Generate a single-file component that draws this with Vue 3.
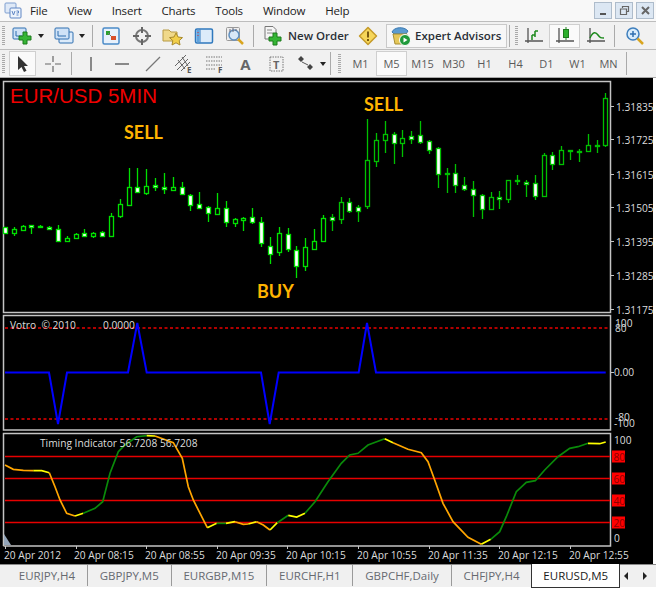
<script setup>
// candles in 3x zoomed px: [wickTop, wickBottom, bodyTop, bodyBottom, filled]
const rawCandles = [
  [440,460,442,458,1],[441,468,447,458,0],[435,453,438,450,0],[435,462,435,440,1],[434,444,438,442,1],
  [437,449,441,446,1],[436,487,446,483,1],[467,485,474,484,0],[460,476,463,474,0],[448,472,460,468,1],
  [456,474,460,469,0],[452,470,457,468,1],[400,470,408,468,0],[356,415,371,408,0],[265,378,320,374,0],
  [265,337,320,335,1],[268,345,317,340,0],[293,333,316,320,1],[278,343,320,326,1],[291,332,320,330,0],
  [306,345,320,343,1],[343,393,345,376,1],[337,387,373,383,1],[378,425,382,399,1],[340,403,385,402,0],
  [363,440,383,427,1],[413,441,418,428,0],[410,453,413,421,0],[385,433,411,427,1],[412,500,427,490,1],
  [470,553,499,521,1],[441,527,458,517,0],[445,517,461,508,1],[498,594,509,558,1],[475,572,502,559,0],
  [447,510,483,506,0],[406,487,413,484,0],
  [403,453,411,421,1],[350,431,367,418,0],[353,400,367,392,1],[375,425,382,393,1],[118,387,241,377,0],
  [159,262,179,242,0],[124,218,163,179,0],[156,252,163,188,1],[150,230,175,189,0],[153,192,169,176,1],
  [124,192,166,185,1],[181,223,184,210,1],[202,325,204,283,1],[265,340,278,283,1],[253,340,279,314,1],
  [291,332,316,327,1],[304,410,326,345,1],[343,416,345,386,1],[335,388,351,386,0],[332,388,351,358,1],
  [300,369,301,358,0],[285,316,300,304,1],[300,350,305,311,1],[285,360,310,348,1],[220,350,226,349,0],
  [216,271,226,251,1],[197,252,210,251,0],[209,240,210,214,1],[207,246,212,215,1],[162,217,194,214,0],
  [181,218,194,198,1],[40,202,53,194,0],
]

const candles = rawCandles.map((c, i) => {
  const y = (v) => Math.round(80 + v / 3)
  const top = y(c[2])
  return {
    x: Math.round(5 + i * 8.83) + 0.5,
    wickTop: y(c[0]),
    wickBottom: y(c[1]),
    bodyY: top + 0.5,
    bodyH: Math.max(y(c[3]) - top, 1),
    fill: c[4] ? '#ffffff' : '#000000',
    color: i < 37 ? '#00e000' : '#00c000',
  }
})

const priceLabels = [
  { text: '1.31835', y: 107 }, { text: '1.31725', y: 140 }, { text: '1.31615', y: 175 },
  { text: '1.31505', y: 208 }, { text: '1.31395', y: 242 }, { text: '1.31285', y: 276 },
  { text: '1.31175', y: 310 },
]

const votroLine = '5,372.5 49,372.5 58,424 67,372.5 128,372.5 137.3,323 146.7,372.5 261,372.5 269.7,424 278.7,372.5 358.7,372.5 367,323 376,372.5 605.7,372.5'

const votroLabels = [
  { text: '100', x: 615, y: 327 }, { text: '80', x: 615, y: 332 }, { text: '0.00', x: 614, y: 376 },
  { text: '-80', x: 615, y: 421 }, { text: '-100', x: 614, y: 427 },
]

const levels = [
  { y: 456.5, text: '80', textY: 460.5 }, { y: 478.5, text: '60', textY: 482.5 },
  { y: 500.5, text: '40', textY: 504.5 }, { y: 522.5, text: '20', textY: 526.5 },
]

// timing line pieces, also in 3x px starting at y 430
const timing = [
  ['#ffa500', '15,105 40,118 70,121 100,122'],
  ['#ffff00', '100,122 125,122 148,128'],
  ['#ffa500', '148,128 165,170 180,210 200,250 225,258'],
  ['#ffff00', '225,258 250,250'],
  ['#0a8a0a', '250,250 285,235 308,215 330,130 355,65 375,45 410,20 440,17'],
  ['#ffff00', '440,17 465,18'],
  ['#ffa500', '465,18 520,38 547,85 565,170 580,210 622,293'],
  ['#ffff00', '622,293 650,280'],
  ['#0a8a0a', '650,280 678,280'],
  ['#ffff00', '678,280 705,275'],
  ['#ffa500', '705,275 730,283 745,282'],
  ['#ffff00', '745,282 770,275'],
  ['#ffa500', '770,275 790,285 810,300'],
  ['#ffff00', '810,300 832,278'],
  ['#0a8a0a', '832,278 865,256'],
  ['#ffff00', '865,256 890,261 915,250'],
  ['#0a8a0a', '915,250 945,215 984,155 1024,100 1049,75 1074,70 1104,45 1154,26'],
  ['#ffff00', '1154,26 1179,38'],
  ['#ffa500', '1179,38 1224,58 1264,68 1284,95 1304,150 1329,220 1359,275 1404,322 1444,343'],
  ['#ffff00', '1444,343 1472,328'],
  ['#0a8a0a', '1472,328 1499,305 1519,260 1549,185 1579,157 1606,152 1634,120 1674,80 1709,55 1734,50 1764,40'],
  ['#ffff00', '1764,40 1799,41 1817,36'],
].map(([color, pts]) => ({
  color,
  points: pts.split(' ').map((p) => {
    const [x, y] = p.split(',').map(Number)
    return `${(x / 3).toFixed(1)},${(430 + y / 3).toFixed(1)}`
  }).join(' '),
}))

const dates = [
  { text: '20 Apr 2012', x: 4, tick: 5 }, { text: '20 Apr 08:15', x: 74, tick: 76 },
  { text: '20 Apr 08:55', x: 145, tick: 146 }, { text: '20 Apr 09:35', x: 216, tick: 217 },
  { text: '20 Apr 10:15', x: 286, tick: 287 }, { text: '20 Apr 10:55', x: 357, tick: 358 },
  { text: '20 Apr 11:35', x: 428, tick: 429 }, { text: '20 Apr 12:15', x: 498, tick: 499 },
  { text: '20 Apr 12:55', x: 569, tick: 570 },
]

const menus = ['File', 'View', 'Insert', 'Charts', 'Tools', 'Window', 'Help']
const periods = ['M1', 'M5', 'M15', 'M30', 'H1', 'H4', 'D1', 'W1', 'MN']
const tabs = ['EURJPY,H4', 'GBPJPY,M5', 'EURGBP,M15', 'EURCHF,H1', 'GBPCHF,Daily', 'CHFJPY,H4']
</script>

<template>
  <div class="terminal">
    <div class="menubar">
      <svg class="app-icon" width="18" height="18" viewBox="0 0 18 18">
        <rect x="1" y="1" width="11" height="10" rx="1" fill="#dfe9f7" stroke="#7f9fd0" />
        <rect x="6" y="6" width="11" height="10" rx="1" fill="#eef4fc" stroke="#5f86c4" />
        <path d="M8 9l1.500 4L11 9M12.500 13h2M12.500 9h2v2h-2" fill="none" stroke="#5f86c4" />
      </svg>
      <span v-for="m in menus" :key="m" class="menu-item">{{ m }}</span>
      <div class="win-buttons">
        <span class="win-btn"><svg width="10" height="10" viewBox="0 0 10 10"><path d="M2 8h6" stroke="#555" stroke-width="2" /></svg></span>
        <span class="win-btn"><svg width="11" height="11" viewBox="0 0 11 11"><path d="M3.500 3V1.500h6v5H8M1.500 4h6v5.500h-6z" fill="none" stroke="#666" stroke-width="1.200" /></svg></span>
        <span class="win-btn"><svg width="11" height="11" viewBox="0 0 11 11"><path d="M2 2l7 7M9 2l-7 7" stroke="#666" stroke-width="2" /></svg></span>
      </div>
    </div>

    <div class="toolbar row-one">
      <span class="grip"></span>
      <span class="tool drop">
        <svg width="22" height="20" viewBox="0 0 22 20">
          <rect x="1" y="2" width="13" height="11" rx="1" fill="#cfe2f7" stroke="#2f6fb0" />
          <path d="M4 5v5h6" fill="none" stroke="#2f6fb0" />
          <path d="M11 6h4v4h4v4h-4v4h-4v-4H7v-4h4z" fill="#35b535" stroke="#1d7a1d" />
        </svg>
        <i class="caret"></i>
      </span>
      <span class="tool drop">
        <svg width="22" height="20" viewBox="0 0 22 20">
          <rect x="6" y="6" width="14" height="11" rx="1" fill="#dcebfa" stroke="#2f6fb0" />
          <rect x="2" y="2" width="14" height="11" rx="1" fill="#cfe2f7" stroke="#2f6fb0" />
          <path d="M5 5v5h8" fill="none" stroke="#2f6fb0" />
        </svg>
        <i class="caret"></i>
      </span>
      <span class="sep first"></span>
      <span class="tool">
        <svg width="20" height="20" viewBox="0 0 20 20">
          <rect x="2" y="2" width="16" height="16" rx="1.500" fill="#e8f1fb" stroke="#4a8ac8" stroke-width="1.500" />
          <path d="M5 5h4v4H5z" fill="#2ea02e" />
          <path d="M7 7l4 4" stroke="#777" />
          <path d="M10 10h5v4h-5z" fill="#d9502a" />
        </svg>
      </span>
      <span class="tool">
        <svg width="20" height="20" viewBox="0 0 20 20">
          <circle cx="10" cy="10" r="6" fill="none" stroke="#777" stroke-width="2" />
          <path d="M10 1v6M10 13v6M1 10h6M13 10h6" stroke="#666" stroke-width="2" />
        </svg>
      </span>
      <span class="tool">
        <svg width="22" height="20" viewBox="0 0 22 20">
          <path d="M1 4h6l2 2h6v9H1z" fill="#f0d98a" stroke="#b79a45" />
          <path d="M14 7l2 4 4.500.6-3.300 3 .8 4.400-4-2.200-4 2.200.8-4.400-3.300-3L12 11z" fill="#f2cf4a" stroke="#a88a2c" />
        </svg>
      </span>
      <span class="tool">
        <svg width="20" height="20" viewBox="0 0 20 20">
          <rect x="1.500" y="3" width="17" height="14" rx="1.500" fill="#dcebfa" stroke="#2f78bd" stroke-width="1.500" />
          <path d="M6 3.500v13" stroke="#2f78bd" />
          <rect x="2.500" y="4" width="3" height="12" fill="#5fa3de" />
          <path d="M3.500 6.500h1M3.500 9.500h1" stroke="#d33" />
        </svg>
      </span>
      <span class="tool">
        <svg width="20" height="20" viewBox="0 0 20 20">
          <rect x="1.500" y="1.500" width="13" height="13" rx="1" fill="#eee" stroke="#999" />
          <circle cx="9" cy="9" r="5" fill="#d8e8f8" stroke="#5f8fbf" stroke-width="1.500" />
          <path d="M5 3v3M8 2v4M11 3v2" stroke="#667" />
          <path d="M13 13l5 5" stroke="#d9a520" stroke-width="2.500" />
        </svg>
      </span>
      <span class="sep second"></span>
      <span class="tool labelled order">
        <svg width="20" height="22" viewBox="0 0 20 22">
          <path d="M2 1.500h8l3 3V14H2z" fill="#f5f5f5" stroke="#777" />
          <path d="M4 5h5M4 8h6" stroke="#888" />
          <path d="M10 8h4v4h4v4h-4v4h-4v-4H6v-4h4z" fill="#35b535" stroke="#1d7a1d" />
        </svg>
        <span class="tool-text">New Order</span>
      </span>
      <span class="tool warn">
        <svg width="20" height="20" viewBox="0 0 20 20">
          <path d="M10 1.500L18.500 10 10 18.500 1.500 10z" fill="#f6d65a" stroke="#c59b2a" stroke-linejoin="round" stroke-width="1.500" />
          <path d="M10 5.500v6M10 13v2" stroke="#7a5a10" stroke-width="2" />
        </svg>
      </span>
      <span class="tool labelled advisors">
        <svg width="22" height="22" viewBox="0 0 22 22">
          <path d="M2 7c2-5 12-6 16-1l-2 3H4z" fill="#5b9bd0" stroke="#3a78b0" />
          <path d="M3 9h14l-1 10H5z" fill="#e5c75a" stroke="#a88f35" />
          <circle cx="15" cy="15" r="5.500" fill="#1f9a3a" stroke="#fff" />
          <path d="M13.500 12.500l4 2.500-4 2.500z" fill="#fff" />
        </svg>
        <span class="tool-text">Expert Advisors</span>
      </span>
      <span class="sep third"></span>
      <span class="grip inner"></span>
      <span class="tool narrow">
        <svg width="20" height="20" viewBox="0 0 20 20">
          <path d="M4 2v15M1 15h18" stroke="#555" stroke-width="1.300" />
          <path d="M8 9v5M8 9h3M11 5v6M11 5h3" stroke="#1d8a1d" stroke-width="1.500" fill="none" />
        </svg>
      </span>
      <span class="tool narrow active">
        <svg width="20" height="20" viewBox="0 0 20 20">
          <path d="M4 2v15M1 15h18" stroke="#555" stroke-width="1.300" />
          <path d="M11 1v13" stroke="#1d8a1d" />
          <rect x="8.500" y="3.500" width="5" height="8" fill="#2bb02b" stroke="#1d7a1d" />
        </svg>
      </span>
      <span class="tool narrow">
        <svg width="20" height="20" viewBox="0 0 20 20">
          <path d="M4 2v15M1 15h18" stroke="#555" stroke-width="1.300" />
          <path d="M4 12c3-7 6-6 8-3s3 3 6 3" fill="none" stroke="#1d8a1d" stroke-width="1.500" />
        </svg>
      </span>
      <span class="sep fourth"></span>
      <span class="tool narrow">
        <svg width="20" height="20" viewBox="0 0 20 20">
          <circle cx="8" cy="8" r="6" fill="#d8ecfb" stroke="#3f7fbd" stroke-width="1.500" />
          <path d="M5 8h6M8 5v6" stroke="#2f6fb0" stroke-width="1.500" />
          <path d="M12.500 12.500l5.500 5.500" stroke="#d9a520" stroke-width="2.500" />
        </svg>
      </span>
    </div>

    <div class="toolbar row-two">
      <span class="grip"></span>
      <span class="draw pointer active">
        <svg width="14" height="18" viewBox="0 0 14 18"><path d="M2 1v14l3.500-3 2.500 5 2.500-1.200-2.500-4.800H12z" fill="#333" /></svg>
      </span>
      <span class="draw">
        <svg width="18" height="18" viewBox="0 0 18 18"><path d="M9 1v6M9 11v6M1 9h6M11 9h6" stroke="#666" stroke-width="1.200" /></svg>
      </span>
      <span class="sep short"></span>
      <span class="draw">
        <svg width="18" height="18" viewBox="0 0 18 18"><path d="M9 2v14" stroke="#666" stroke-width="1.500" /></svg>
      </span>
      <span class="draw">
        <svg width="18" height="18" viewBox="0 0 18 18"><path d="M2 9h14" stroke="#666" stroke-width="1.500" /></svg>
      </span>
      <span class="draw">
        <svg width="18" height="18" viewBox="0 0 18 18"><path d="M2 16L16 2" stroke="#777" stroke-width="1.300" /></svg>
      </span>
      <span class="draw">
        <svg width="20" height="20" viewBox="0 0 20 20">
          <path d="M1 12L12 1M3 16L14 5M7 17L16 8M4 6l7 9M8 3l6 9" stroke="#666" fill="none" />
          <text x="13" y="19" class="mini">E</text>
        </svg>
      </span>
      <span class="draw">
        <svg width="20" height="20" viewBox="0 0 20 20">
          <path d="M1 3h16M1 7h16M1 11h16M1 15h10" stroke="#777" stroke-dasharray="1.500 1" fill="none" />
          <text x="13" y="19" class="mini">F</text>
        </svg>
      </span>
      <span class="draw letter">A</span>
      <span class="draw">
        <svg width="18" height="18" viewBox="0 0 18 18">
          <rect x="2" y="2" width="13" height="14" fill="none" stroke="#777" stroke-dasharray="1.500 1" />
          <text x="5" y="14" class="mid">T</text>
        </svg>
      </span>
      <span class="draw shapes">
        <svg width="20" height="18" viewBox="0 0 20 18">
          <path d="M1 4l3 3 3-3-3-3zM10 12l3 3 3-3-3-3z" fill="#444" />
          <path d="M5 7l6 3" stroke="#555" />
        </svg>
        <i class="caret"></i>
      </span>
      <span class="sep short last"></span>
      <span class="grip inner"></span>
      <span v-for="p in periods" :key="p" class="period" :class="{ active: p === 'M5' }">{{ p }}</span>
      <span class="sep short end"></span>
    </div>

    <div class="chart-window">
      <svg class="pane" width="653" height="236" viewBox="0 78 653 236">
        <rect x="3.500" y="81.500" width="607" height="231" fill="none" stroke="#c4c4c4" stroke-width="1.500" />
        <g v-for="(c, i) in candles" :key="i">
          <line :x1="c.x" :x2="c.x" :y1="c.wickTop" :y2="c.wickBottom" :stroke="c.color" stroke-width="1.300" />
          <rect :x="c.x - 2" :y="c.bodyY" width="4" :height="c.bodyH" :fill="c.fill" :stroke="c.color" stroke-width="1.300" />
        </g>
        <text x="10" y="103" class="title">EUR/USD 5MIN</text>
        <text x="124" y="139" class="signal">SELL</text>
        <text x="364" y="111" class="signal">SELL</text>
        <text x="257" y="298" class="signal">BUY</text>
        <g v-for="p in priceLabels" :key="p.text">
          <line x1="611" x2="614" :y1="p.y - 0.5" :y2="p.y - 0.5" stroke="#c4c4c4" />
          <text x="616" :y="p.y + 3.500" class="axis">{{ p.text }}</text>
        </g>
      </svg>

      <svg class="pane" width="653" height="118" viewBox="0 314 653 118">
        <rect x="3.500" y="315.500" width="607" height="114.500" fill="none" stroke="#c4c4c4" stroke-width="1.500" />
        <line x1="5" x2="610" y1="328" y2="328" class="dotted" />
        <line x1="5" x2="610" y1="419" y2="419" class="dotted" />
        <polyline :points="votroLine" fill="none" stroke="#0000ff" stroke-width="2" />
        <text x="10" y="329" class="axis">Votro&nbsp; © 2010</text>
        <text x="103" y="329" class="axis">0.0000</text>
        <text v-for="l in votroLabels" :key="l.text" :x="l.x" :y="l.y" class="axis">{{ l.text }}</text>
        <line x1="611" x2="614" y1="372.500" y2="372.500" stroke="#c4c4c4" />
      </svg>

      <svg class="pane" width="653" height="132" viewBox="0 432 653 132">
        <path d="M3.500 546V433.500H610.500V546H3.500" fill="none" stroke="#c4c4c4" stroke-width="1.500" />
        <path d="M4 534l7 11H4z" fill="#93a4b8" />
        <g v-for="l in levels" :key="l.y">
          <line x1="5" x2="610" :y1="l.y" :y2="l.y" stroke="#e60000" stroke-width="1.300" />
          <rect x="612" :y="l.y - 6" width="13" height="12" fill="#ff0000" />
          <text x="613.500" :y="l.textY" class="axis on-red">{{ l.text }}</text>
        </g>
        <polyline v-for="(s, i) in timing" :key="i" :points="s.points" fill="none" :stroke="s.color" stroke-width="1.700" />
        <text x="40" y="447" class="axis">Timing Indicator 56.7208 56.7208</text>
        <text x="614" y="444" class="axis">100</text>
        <text x="614" y="542" class="axis">0</text>
        <g v-for="d in dates" :key="d.text">
          <line :x1="d.tick + 0.5" :x2="d.tick + 0.5" y1="546" y2="549" stroke="#c4c4c4" />
          <text :x="d.x" y="559" class="axis">{{ d.text }}</text>
        </g>
      </svg>
    </div>

    <div class="tabbar">
      <span v-for="t in tabs" :key="t" class="tab">{{ t }}</span>
      <span class="tab current">EURUSD,M5</span>
      <span class="tab-arrows">
        <svg width="8" height="10" viewBox="0 0 8 10"><path d="M6 1v8L2 5z" fill="#222" /></svg>
        <svg width="8" height="10" viewBox="0 0 8 10"><path d="M2 1v8l4-4z" fill="#222" /></svg>
      </span>
    </div>
  </div>
</template>

<style scoped>
.terminal {
  width: 656px;
  height: 591px;
  background: #ffffff;
  display: flex;
  flex-direction: column;
  font-family: "Open Sans", "Liberation Sans", sans-serif;
  overflow: hidden;
}

.menubar {
  height: 21px;
  box-sizing: border-box;
  background: #f8f8f8;
  display: flex;
  align-items: center;
  font-size: 11.500px;
  letter-spacing: -0.2px;
  color: #222;
}

.app-icon {
  margin-left: 4px;
  margin-right: 8px;
}

.menu-item {
  margin-right: 20px;
}

.win-buttons {
  margin-left: auto;
  margin-right: 2px;
  display: flex;
  gap: 3px;
}

.win-btn {
  width: 18px;
  height: 17px;
  background: #dce7f3;
  border: 1px solid #aebccb;
  box-sizing: border-box;
  display: flex;
  align-items: center;
  justify-content: center;
}

.toolbar {
  display: flex;
  align-items: center;
  background: #f1f1f1;
  border-top: 1px solid #bdbdbd;
  box-sizing: border-box;
}

.row-one {
  height: 28px;
}

.row-two {
  height: 29px;
  border-bottom: 1px solid #a8a8a8;
}

.grip {
  width: 3px;
  height: 20px;
  margin-left: 2px;
  background: repeating-linear-gradient(to bottom, #a9a9a9 0 1px, #f1f1f1 1px 2px);
}

.grip.inner {
  margin-left: 5px;
}

.tool {
  width: 31px;
  height: 24px;
  flex: none;
  display: flex;
  align-items: center;
  justify-content: center;
  box-sizing: border-box;
}

.tool.drop {
  width: 37px;
  gap: 4px;
  margin-left: 4px;
}

.sep {
  width: 1px;
  height: 22px;
  background: #aaaaaa;
  flex: none;
}

.sep.first {
  margin: 0 2px 0 5px;
}

.sep.second {
  margin: 0 3px;
}

.sep.third {
  margin-left: 2px;
}

.sep.fourth {
  margin: 0 4px 0 3px;
}

.caret {
  width: 0;
  height: 0;
  border: 3px solid transparent;
  border-top: 4px solid #222;
  border-bottom: 0;
}

.labelled {
  gap: 5px;
  justify-content: flex-start;
}

.order {
  width: 99px;
  padding-left: 6px;
}

.warn {
  width: 24px;
  margin-right: 6px;
}

.advisors {
  width: 121px;
  padding-left: 3px;
  gap: 3px;
  background: #f7f7f7;
  border: 1px solid #c9c9c9;
}

.tool-text {
  font-size: 11.500px;
  font-weight: 600;
  color: #2a2f36;
  white-space: nowrap;
}

.active {
  background: #fafafa;
  border: 1px solid #cfcfcf;
  box-sizing: border-box;
}

.draw {
  width: 31px;
  height: 25px;
  flex: none;
  display: flex;
  align-items: center;
  justify-content: center;
  box-sizing: border-box;
}

.pointer {
  width: 27px;
  margin: 0 1px 0 4px;
}

.draw.letter {
  font-size: 15px;
  font-weight: 700;
  color: #666;
}

.draw.shapes {
  gap: 3px;
  width: 38px;
}

.sep.short {
  height: 23px;
  margin: 0 3px;
}

.sep.short.last {
  margin: 0 2px 0 0;
}

.sep.short.end {
  margin-left: 2px;
}

.period {
  width: 31px;
  height: 25px;
  flex: none;
  display: flex;
  align-items: center;
  justify-content: center;
  font-size: 11px;
  color: #5a5a5a;
  box-sizing: border-box;
}

.row-two .grip.inner + .period {
  margin-left: 4px;
}

.chart-window {
  width: 653px;
  height: 486px;
  background: #000000;
  display: flex;
  flex-direction: column;
  flex: none;
}

.pane {
  display: block;
  flex: none;
  overflow: visible;
}

.title {
  font-family: "Liberation Sans", Arial, sans-serif;
  font-size: 20.500px;
  fill: #f00000;
}

.signal {
  font-family: Lato, "Open Sans", sans-serif;
  font-weight: 700;
  font-size: 18px;
  fill: #ffb400;
}

.axis {
  font-family: "Open Sans", "Liberation Sans", sans-serif;
  font-size: 10.200px;
  font-weight: 500;
  fill: #dcdcdc;
}

.on-red {
  fill: #8a0000;
}

.dotted {
  stroke: #b00000;
  stroke-width: 1.800;
  stroke-dasharray: 3 2.500;
}

.mini {
  font-family: "Open Sans", sans-serif;
  font-size: 8px;
  font-weight: 700;
  fill: #555;
}

.mid {
  font-family: "Open Sans", sans-serif;
  font-size: 11px;
  font-weight: 700;
  fill: #666;
}

.tabbar {
  height: 23px;
  display: flex;
  background: #f0f0f0;
  border-top: 1px solid #8a8a8a;
  box-sizing: border-box;
  flex: none;
  font-size: 11.500px;
  padding-left: 7px;
}

.tab {
  height: 21px;
  padding: 0 11.800px;
  display: flex;
  align-items: center;
  color: #666a70;
  border-right: 1px solid #9a9a9a;
  white-space: nowrap;
}

.tab:nth-child(6) {
  border-right: none;
}

.tab.current {
  background: #ffffff;
  color: #1a1a1a;
  border-left: 1px solid #333;
  border-right: 1px solid #333;
  border-bottom: 1px solid #333;
  margin-top: -1px;
  height: 23px;
  padding: 0 11px;
}

.tab-arrows {
  margin-left: auto;
  display: flex;
  gap: 11px;
  align-items: center;
  padding-right: 7px;
}
</style>
